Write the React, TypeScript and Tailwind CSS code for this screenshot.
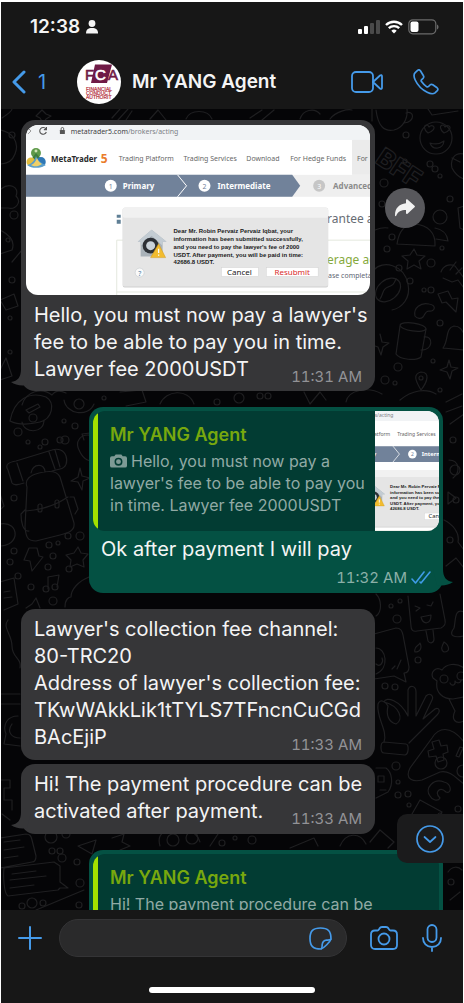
import type { ReactNode } from "react";

type QuoteData = {
  author: string;
  text: string;
  photo?: boolean;
};

type Message = {
  id: number;
  mine?: boolean;
  tail?: boolean;
  photo?: boolean;
  quote?: QuoteData;
  text: string;
  time: string;
  gap: string;
};

const CONTACT = "Mr YANG Agent";

const messages: Message[] = [
  {
    id: 1,
    tail: true,
    photo: true,
    text: "Hello, you must now pay a lawyer's\nfee to be able to pay you in time.\nLawyer fee 2000USDT",
    time: "11:31 AM",
    gap: "mt-0",
  },
  {
    id: 2,
    mine: true,
    tail: true,
    quote: {
      author: CONTACT,
      text: "Hello, you must now pay a\nlawyer's fee to be able to pay you\nin time. Lawyer fee 2000USDT",
      photo: true,
    },
    text: "Ok after payment I will pay",
    time: "11:32 AM",
    gap: "mt-4",
  },
  {
    id: 3,
    text: "Lawyer's collection fee channel:\n80-TRC20\nAddress of lawyer's collection fee:\nTKwWAkkLik1tTYLS7TFncnCuCGd\nBAcEjiP",
    time: "11:33 AM",
    gap: "mt-4",
  },
  {
    id: 4,
    tail: true,
    text: "Hi! The payment procedure can be\nactivated after payment.",
    time: "11:33 AM",
    gap: "mt-1",
  },
  {
    id: 5,
    mine: true,
    tail: true,
    quote: { author: CONTACT, text: "Hi! The payment procedure can be\nactivated after payment." },
    text: "Ok",
    time: "11:34 AM",
    gap: "mt-4",
  },
];

const dots = [
  [18, 432, 4], [28, 442, 2], [40, 447, 2], [45, 442, 3], [60, 440, 3], [65, 440, 4], [75, 426, 3], [64, 421, 2],
  [14, 498, 3], [49, 545, 3], [58, 543, 2], [68, 536, 3], [80, 536, 4], [14, 551, 3], [10, 562, 3], [53, 556, 3],
  [48, 567, 3], [69, 569, 3], [18, 576, 3], [31, 587, 3], [53, 601, 4], [10, 318, 2], [10, 352, 2], [406, 135, 3],
  [405, 161, 2], [430, 164, 3], [435, 169, 3], [384, 183, 4], [382, 204, 3], [440, 176, 2], [450, 199, 3],
  [387, 249, 3], [399, 268, 3], [431, 263, 4], [410, 281, 3], [431, 290, 3], [442, 248, 2], [392, 237, 3],
  [424, 290, 2], [440, 323, 3], [398, 367, 4], [385, 380, 4], [433, 361, 2], [395, 383, 2], [440, 390, 2],
  [260, 396, 3], [268, 396, 3], [239, 398, 5], [217, 402, 3], [104, 398, 2], [391, 606, 2], [400, 601, 2],
  [397, 619, 4], [418, 660, 3], [385, 686, 3], [395, 687, 3], [396, 766, 4], [398, 782, 2], [398, 795, 3],
  [408, 794, 3], [409, 805, 2], [458, 809, 3], [440, 815, 2], [51, 837, 6], [60, 851, 3], [52, 851, 3], [62, 858, 4],
  [77, 862, 3], [66, 834, 4], [80, 883, 4], [32, 903, 5], [43, 903, 3], [22, 906, 3], [79, 905, 3], [451, 882, 3],
  [222, 843, 3], [235, 838, 2], [252, 840, 4], [173, 840, 6], [192, 838, 6], [12, 135, 3], [453, 440, 3],
  [450, 540, 3], [456, 500, 3], [14, 215, 4], [8, 240, 2], [12, 280, 3], [455, 470, 5],
];

// faint line drawings behind the conversation
function Wallpaper() {
  return (
    <svg
      aria-hidden="true"
      viewBox="0 109 464 801"
      preserveAspectRatio="xMidYMin slice"
      className="absolute inset-0 h-full w-full"
      fill="none"
      stroke="#1f1f21"
      strokeWidth="1.2"
      strokeLinecap="round"
      strokeLinejoin="round"
    >
      {dots.map(([x, y, r]) => (
        <circle key={`${x}-${y}`} cx={x} cy={y} r={r} />
      ))}
      {/* top strip */}
      <path d="M2 118c6-4 10-8 10-9M38 114l4-4 4 4 5 2-5 3-3 4-3-5-4-2zM112 118l8-9M118 120l10-11M126 120l6-9M150 119l8-9 8 10M186 119c4-10 22-10 26 0M250 118l12-8M262 120l12-10M300 119c3-9 14-12 20-5M330 119c6-8 18-10 22-9" />
      {/* left edge */}
      <path d="M0 130c12 2 20 12 15 24-3 8-10 10-15 10M0 190c8-8 20-4 16 6 6 6 0 14-8 12H0M0 230c8 4 16 10 12 20l-12 4M12 262l10-12M0 300l14-6 4 12-12 4zM0 370l6-12 6 18-12 4" />
      {/* cup and smiley */}
      <path d="M376 110c2 16 8 22 18 20 8-2 14-10 13-21M406 113c8-3 10 8-2 10M372 109v12M428 109l4 6 26-4" />
      <circle cx="436" cy="138" r="16" />
      <path d="M428 133c-4-3-5-8-1-8 1 0 2 2 2 2s2-2 4-1c3 2-1 6-5 7zM444 133c-4-3-5-8-1-8 1 0 2 2 2 2s2-2 4-1c3 2-1 6-5 7zM430 143c6 2 10 1 14-2-1 8-11 10-14 2z" />
      <path d="M464 154c-10-2-14 6-12 14 3 6 6 9 12 11M452 158l8 4" />
      {/* two people */}
      <path d="M397 244c2-14 8-20 18-20 12 1 21 8 20 22zM388 228c-5-1-8 0-13 2M435 228c6 1 12 5 13 13l-12-2" />
      <path d="M408 218c-6-8 2-16 9-13 8 3 7 13 1 18" />
      <circle cx="440" cy="217" r="7" />
      <path d="M464 206l-6 2 2 20 4 2" />
      <path d="M414 249l3 6 8 1-6 5 2 8-7-4-7 4 1-8-6-5 8-1z" />
      <path d="M441 272c2-6 8-9 14-6l9 12M443 278l9 4 6-2 6 8M450 270l6-8M456 274l6-6" />
      {/* coffee bean */}
      <path d="M374 270c8-10 30-6 34 14 3 14-6 24-16 26" />
      <ellipse cx="388" cy="290" rx="14" ry="10" transform="rotate(-40 388 290)" />
      <path d="M380 299c4-6 2-10 8-12s6-4 8-8" />
      <path d="M438 294l10-3 4 8 6-1-2 14-10-10-4 1zM415 316c-2-8 6-14 14-12 8 1 6 8 0 7-4 0-4 4-6 6s-6 2-8-1z" />
      {/* mug, bell, pin, spark */}
      <ellipse cx="413" cy="327" rx="13" ry="4" transform="rotate(8 413 327)" />
      <path d="M400 326l-4 28c4 6 20 7 25 3l5-28M424 337c10-2 9 14-3 13" />
      <path d="M443 348c6-8 2-20 11-22 6 0 8 4 10 8M443 348l21 2" />
      <path d="M421 390c-6-10-8-16 0-18 9 0 7 9 0 18z" />
      <circle cx="421" cy="378" r="2" />
      <path d="M449 360l2 7 7 1-6 3-2 8-3-7-7-2 7-3zM380 334l2 8 7 1-6 4-2 8-3-8-3-1" />
      {/* strip between first two bubbles */}
      <path d="M22 405c4-14 20-18 30-10 4-6 10-4 14-2M120 392l22-2 4 12-20 4M160 404c6-14 28-16 34 0M304 392l6 12 10-12 6 8M346 402c2-12 22-16 36-8M400 400c12-10 26-12 36-6M446 402l16-8" />
      {/* camper, roll and backpack */}
      <path d="M10 421c4-22 20-30 36-24 10 6 6 22-6 25-12 3-22 3-30-1zM26 410l12-6 2 3-11 6zM22 422c2 12 22 12 22-2M64 400c2 14 24 18 30 4" />
      <circle cx="33" cy="418" r="4" />
      <circle cx="79" cy="404" r="5" />
      <path d="M8 470c-4-6 2-8 8-9l36-11c6-2 12 0 14 6s0 12-6 13l-8 2M8 470l4 13c2 3 6 2 12 0M17 463l6 18M49 452l6 17M55 450l5 17" />
      <path d="M27 487c-3-8 4-12 12-14s18-3 21 4l14 46c1 8-6 10-14 12l-24 6c-10 0-10-6-11-14zM31 473c2-10 14-10 14-1M26 511c16-1 30-6 42-14M25 510l-4 4c0 8 2 18 8 17M70 497l4 0 4 12-3 5" />
      <rect x="38" y="504" width="4" height="8" rx="2" />
      <rect x="55" y="500" width="4" height="8" rx="2" />
      <path d="M80 468l2 8 8 2-7 3-1 9-4-8-7-1 7-4zM94 436c-14-4-20 6-14 16 4 8 10 10 14 8M84 440l-2-6 8-1" />
      <path d="M0 524c10-2 16 4 15 12-2 8-10 10-15 10M0 494l4 12-4 4" />
      <path d="M29 548l8 0 2 8 4 1-11 14-2-10-6-1zM78 547l3 6 7 1-5 6 1 7-7-3-7 3 1-7-5-5 8-2zM48 589v-12l11-2-2 12" />
      <circle cx="46" cy="589" r="3" />
      <circle cx="55" cy="587" r="3" />
      <path d="M0 582l14-4 4 26-14 6M4 592l6-1M4 598l8-1M65 607c0-8 4-10 6-10 0-8 8-16 18-20M26 608l6-4 4-6 4 10" />
      {/* left of the grey bubbles */}
      <path d="M8 620c-6 8 4 14 4 26s10 12 8 22M0 694h20M0 704h20M18 716c-10 0-16 8-12 18l-2 10 16 2M12 724c-6 8 0 14 8 14M0 780h10v8H4v12h8v10M10 820l-8-6" />
      {/* right of the outgoing bubble */}
      <path d="M446 412l16-6M450 424l14-10M449 460c10 0 12 12 4 18M448 492l8 6-8 6zM444 520c8 4 16 12 14 22l6 8M446 566l10-8 8 10" />
      {/* popsicle, speech, cat */}
      <path d="M408 596l3 30c0 4 2 6 6 5l24-3c4-2 5-4 4-8l-5-26M426 631l2 10c2 3 6 2 6-2l-1-9M415 606l5 2-4 3M427 605l4 1 2-4M421 617l10-2c0 10-8 10-10 2zM376 594c6 6 6 18 0 22" />
      <path d="M374 634l22-6c5 0 6 3 7 7l6 32c0 4-2 6-5 6l2 9-12-6-20 3M376 648c10 0 14 20 0 26M376 664c4 4 8-2 6-6M395 666l-3 3M401 660l-4 9" />
      <path d="M415 652c-2-6 4-6 5-9 2 4 1 9-5 9zM444 652c-4-2-2-6 0-10 5 3 7 10 0 10zM464 612c-10-4-8 8-10 16-6 8 0 10 10 8" />
      <path d="M464 668c-8-6-18-4-22 2-6-4-12 2-9 8l4 3c-2 12 6 18 16 18l11-2M449 699l6 12c-4 8 0 14 9 10" />
      <circle cx="444" cy="679" r="4" />
      <circle cx="461" cy="676" r="4" />
      <path d="M450 683c2 4 6 2 5-2 2 3 6 2 6-1" />
      {/* ok hand */}
      <path d="M384 742c4-12-8-24-6-38 2-6 8-2 10 2-2 8 0 16 8 18 8-4 4-18-12-22 2-6 16-2 24 14l0-26c2-6 8-4 8 2l0 24 10-20c4-4 8 0 6 4l-9 19 12-10c4-2 6 2 2 6l-28 28" />
      <path d="M384 742l22 2c3 0 3 10-1 11l-21-2c-4 0-4-11 0-11z" />
      {/* gamepad */}
      <path d="M464 742c-14-18-26-14-32-4l-22 30c-6 12 4 14 12 12l18-8c10-2 16 6 24 12" />
      <path d="M432 742l7-2 2 6 6-1 1 7-5 2 1 6-6 2-2-6-7 1-1-6 6-2z" />
      <circle cx="441" cy="763" r="6" />
      <circle cx="463" cy="771" r="6" />
      <path d="M456 756l4-9 3 1-4 9zM430 796c-6-8 4-18 14-14 8 2 8 12 2 10-6-6-12 0-6 6-2 4-8 2-10-2z" />
      <path d="M376 768l10 0c6 4 8 16 2 24l-12 6M378 776h6v6h-6zM380 790h6M420 800l22 12-8 14M420 800l-8 14" />
      {/* envelopes and tools, bottom left */}
      <path d="M0 838l26-4c4 0 5 2 6 6l4 16c0 4-2 6-4 6l-32 6M4 842l16-2M4 850l20-3M4 858l14-2M4 868l50-6 6 4 0 16 8 6-8 0-2 2-50 6c-4-2-5-20-4-28zM12 874l24-3M10 880l36-4M10 888l24-3M36 910l48-20M78 846l18-6-4 14z" />
      <path d="M112 838l12-4-2 8 8 4-10 4M160 846c-4-14 8-18 16-12 8-6 20-4 24 8M210 846l8-12M290 848l24-10 4 8M340 846c6-14 20-14 26-2M370 842l10-12 14 12-6 6M448 872c4-6 10-6 14-2M450 900l10-8" />
      <text
        x="374"
        y="162"
        transform="rotate(34 374 162)"
        className="font-['Inter',sans-serif] text-[26px] font-extrabold"
      >
        BFF
      </text>
    </svg>
  );
}

// attached photo, also used cropped as the quote thumbnail
function BrokerPhoto({ viewBox, className }: { viewBox: string; className: string }) {
  return (
    <svg
      role="img"
      aria-label="Photo"
      viewBox={viewBox}
      preserveAspectRatio="xMidYMid slice"
      className={`font-['Noto_Sans',sans-serif] ${className}`}
    >
      <rect x="20" y="120" width="360" height="180" fill="#fff" />
      <rect x="20" y="120" width="360" height="20" fill="#f1f3f5" />
      <path d="M28 128l3 3-3 3" fill="none" stroke="#999" />
      <path d="M46 129a3.400 3.400 0 1 0 .4 3M46.500 127v2.600h-2.600" fill="none" stroke="#555" strokeWidth="1.100" />
      <rect x="60" y="130" width="5" height="4" rx=".5" fill="#555" />
      <path d="M61.200 130v-1.200a1.300 1.300 0 0 1 2.600 0v1.200" fill="none" stroke="#555" strokeWidth=".9" />
      <text x="71" y="134" fontSize="7" fill="#3c4043">
        metatrader5.com<tspan fill="#7c8085">/brokers/acting</tspan>
      </text>

      <circle cx="36" cy="153" r="5" fill="#5f9a4a" />
      <path d="M30 161l6-8 7 8z" fill="#3f7d3d" />
      <circle cx="31" cy="162" r="4.500" fill="#e2bd3f" />
      <circle cx="41" cy="162" r="4.800" fill="#2f77b5" />
      <path d="M27 165c5-1 8-5 9-9 2 5 5 7 10 9-6 4-14 4-19 0z" fill="#5d9fc9" />
      <path d="M31 165c3-1 5-4 6-7 1 3 3 5 5 6-4 3-8 3-11 1z" fill="#f0d068" />
      <circle cx="36" cy="151" r="1.500" fill="#cfe3b5" />
      <text x="51" y="162" fontSize="8" fontWeight="700" fill="#2b2b2b">MetaTrader</text>
      <text x="101" y="163" fontSize="12" fontWeight="700" fill="#ea7c2b">5</text>

      <rect x="353" y="140" width="30" height="35" fill="#ebebeb" />
      <g fontSize="7" fill="#666">
        <text x="119" y="161">Trading Platform</text>
        <text x="184" y="161">Trading Services</text>
        <text x="247" y="161">Download</text>
        <text x="291" y="161">For Hedge Funds</text>
        <text x="358" y="161">For</text>
      </g>

      <rect x="20" y="175" width="360" height="22" fill="#efefef" />
      <path d="M20 175h273l8 11-8 11H20z" fill="#71829a" />
      <path d="M178 175l9 11-9 11" fill="none" stroke="#fff" />
      <circle cx="111" cy="186" r="6" fill="#fff" />
      <circle cx="205" cy="186" r="6" fill="#fff" />
      <circle cx="320" cy="186" r="6" fill="#c6c6c6" />
      <g fontSize="7" textAnchor="middle">
        <text x="111" y="189" fill="#71829a">1</text>
        <text x="205" y="189" fill="#71829a">2</text>
        <text x="320" y="189" fill="#fff">3</text>
      </g>
      <g fontSize="8" fontWeight="700">
        <text x="123" y="189" fill="#fff">Primary</text>
        <text x="218" y="189" fill="#fff">Intermediate</text>
        <text x="334" y="189" fill="#8b8b8b">Advanced</text>
      </g>

      <path d="M117 215h4v3h-4zM117 220h4v4h-4z" fill="#5f7f95" />
      <path d="M117 300V240.500h260M117 292.500h260" fill="none" stroke="#e4e8de" />
      <text x="328" y="223" fontSize="12" fill="#666b73">rantee a</text>
      <text x="328" y="264" fontSize="12" fill="#86a93c">erage ag</text>
      <text x="329" y="278" fontSize="7" fill="#5d6472">ase completa</text>

      <rect x="123" y="208" width="206" height="80" rx="2" fill="#cfcfcf" />
      <rect x="123" y="208" width="206" height="79" rx="2" fill="#e5e5e5" />
      <rect x="123" y="208" width="206" height="10" rx="2" fill="#f1f1f1" />
      <path d="M152 230l-14 12h3v15h22v-15h4z" fill="#a9b2b9" />
      <path d="M152 230l-14 12h3v4l11-10 11 10v-4h4z" fill="#c3ccd3" />
      <circle cx="151" cy="246" r="8" fill="#2c3036" />
      <circle cx="151" cy="246" r="4.500" fill="#c9d2da" />
      <path d="M159 244l7 14h-15z" fill="#f2bc2f" stroke="#d09a1c" strokeWidth=".5" />
      <path d="M159 249v4.500M159 255v1.200" stroke="#fff" strokeWidth="1.300" />
      <g fontSize="6" fontWeight="700" fill="#1b1b1b" className="font-['Liberation_Sans',sans-serif]">
        <text x="174" y="233">Dear Mr. Robin Pervaiz Pervaiz Iqbat, your</text>
        <text x="174" y="241">information has been submitted successfully,</text>
        <text x="174" y="249">and you need to pay the lawyer's fee of 2000</text>
        <text x="174" y="257">USDT. After payment, you will be paid in time:</text>
        <text x="174" y="264">42686.8 USDT.</text>
      </g>
      <circle cx="140" cy="273" r="4.500" fill="#fafafa" stroke="#c4c9cd" strokeWidth=".6" />
      <text x="140" y="276" fontSize="7" textAnchor="middle" fill="#4d7fa8">?</text>
      <rect x="222" y="268" width="37" height="9" fill="#fff" stroke="#d2d2d2" strokeWidth=".5" />
      <rect x="267" y="268" width="52" height="9" fill="#fff" stroke="#d2d2d2" strokeWidth=".5" />
      <g fontSize="8" textAnchor="middle">
        <text x="240" y="275" fill="#222">Cancel</text>
        <text x="293" y="275" fill="#d92b2b">Resubmit</text>
      </g>
    </svg>
  );
}

function Tail({ mine }: { mine?: boolean }) {
  return mine ? (
    <svg aria-hidden="true" viewBox="0 0 20 20" className="absolute -right-[10px] bottom-[4px] h-5 w-5">
      <path d="M10 0c0 8 3 12 10 13-4 3-10 4-16 3L0 0z" fill="#045143" />
    </svg>
  ) : (
    <svg aria-hidden="true" viewBox="0 0 20 20" className="absolute -left-[10px] bottom-[2px] h-5 w-5">
      <path d="M10 0c0 8-3 12-10 13 4 3 10 4 16 3L20 0z" fill="#363638" />
    </svg>
  );
}

function Quote({ quote }: { quote: QuoteData }) {
  return (
    <blockquote className="flex h-[120px] overflow-hidden rounded-xl bg-[#023c33]">
      <span className="w-[5px] shrink-0 bg-[#a3e000]" />
      <div className="min-w-0 flex-1 pt-3 pl-3">
        <p className="text-lg leading-6 font-semibold text-[#78a80e]">{quote.author}</p>
        <p className="mt-[3px] text-base leading-[22px] whitespace-pre text-[#91aaa5]">
          {quote.photo && (
            <svg aria-label="Photo" viewBox="0 0 18 14" className="mr-1 inline-block h-[14px] w-[17px] align-[-1px]">
              <path
                fillRule="evenodd"
                d="M6 0h6l1.500 2H16a2 2 0 0 1 2 2v8a2 2 0 0 1-2 2H2a2 2 0 0 1-2-2V4a2 2 0 0 1 2-2h2.500zM9 3.500a4.200 4.200 0 1 0 0 8.400 4.200 4.200 0 0 0 0-8.400zm0 1.600a2.600 2.600 0 1 1 0 5.200 2.600 2.600 0 0 1 0-5.200z"
                fill="#7d9a95"
              />
            </svg>
          )}
          {quote.text}
        </p>
      </div>
      {quote.photo && <BrokerPhoto viewBox="153 126 89 167" className="h-full w-16 shrink-0" />}
    </blockquote>
  );
}

function Bubble({ message }: { message: Message }) {
  const { mine, tail, photo, quote, text, time } = message;

  if (mine) {
    return (
      <div className="relative w-full max-w-[354px] rounded-[14px] bg-[#045143] px-1 pt-1 pb-1">
        {tail && <Tail mine />}
        {quote && <Quote quote={quote} />}
        <p className="mt-[5px] pl-2 text-xl leading-[27px] whitespace-pre text-[#f4f6f5]">{text}</p>
        <p className="mt-1 flex items-center justify-end gap-1 pr-2 text-[15px] leading-[22px] text-[#8bb0a8]">
          <time className="tabular-nums">{time}</time>
          <svg aria-label="Read" viewBox="0 0 20 13" className="h-[13px] w-5" fill="none" stroke="#3f9be6" strokeWidth="1.600" strokeLinecap="round" strokeLinejoin="round">
            <path d="M1 8l3.500 4L13 1M9 11l1 1L19 1" />
          </svg>
        </p>
      </div>
    );
  }

  return (
    <div className={`relative w-full max-w-[354px] rounded-[14px] bg-[#363638] px-[5px] ${photo ? "pt-[5px] pb-2" : "pt-[7px] pb-[9px]"}`}>
      {tail && <Tail />}
      {photo && <BrokerPhoto viewBox="26 125 345 170" className="mb-[7px] block aspect-[345/170] w-full rounded-xl" />}
      <p className="pr-2 pl-2 text-xl leading-[27px] whitespace-pre text-[#f4f4f5]">
        {text}
        <time className="float-right mt-3 -mb-[3px] text-[15px] leading-[18px] tabular-nums text-[#929296]">{time}</time>
      </p>
    </div>
  );
}

function StatusBar() {
  return (
    <div className="flex h-[26px] items-center pr-6 pl-[29px]">
      <span className="text-[19px] leading-6 font-semibold">12:38</span>
      <svg aria-hidden="true" viewBox="0 0 12 14" className="ml-[6px] h-[14px] w-3" fill="#f4f4f4">
        <circle cx="6" cy="3.500" r="3.400" />
        <path d="M0 13.500c0-4 2-5.500 6-5.500s6 1.500 6 5.500z" />
      </svg>
      <div className="ml-auto flex items-center gap-[5px]">
        <svg aria-hidden="true" viewBox="0 0 22 14" className="h-[14px] w-[22px]" fill="#4a4a4a">
          <rect x="0" y="9" width="4" height="5" rx="1" fill="#fff" />
          <rect x="6" y="6" width="4" height="8" rx="1" fill="#fff" />
          <rect x="12" y="3" width="4" height="11" rx="1" />
          <rect x="18" y="0" width="4" height="14" rx="1" />
        </svg>
        <svg aria-hidden="true" viewBox="0 0 18 14" className="h-[14px] w-[18px]" fill="none" stroke="#fff" strokeWidth="2.400">
          <path d="M1 5a11.500 11.500 0 0 1 16 0M3.800 8.200a7.500 7.500 0 0 1 10.400 0" />
          <path d="M9 13.500L6.300 10.700a4 4 0 0 1 5.400 0z" fill="#fff" stroke="none" />
        </svg>
        <svg aria-hidden="true" viewBox="0 0 31 16" className="h-4 w-[31px]">
          <rect x=".8" y=".8" width="27" height="14" rx="4" fill="none" stroke="#6b6b6b" strokeWidth="1.200" />
          <rect x="2.500" y="2.500" width="8" height="10.600" rx="2" fill="#fff" />
          <path d="M29 5.500c2 .8 2 4 0 5z" fill="#6b6b6b" />
        </svg>
      </div>
    </div>
  );
}

function Avatar() {
  return (
    <svg role="img" aria-label="FCA" viewBox="0 0 44 44" className="h-11 w-11 shrink-0 font-['Liberation_Sans',sans-serif]">
      <circle cx="22" cy="22" r="22" fill="#fff" />
      <path d="M18 4.500h17L30 23H14z" fill="#6f1a46" />
      <g fontSize="15" fill="#6f1a46" stroke="#6f1a46" strokeWidth=".6">
        <text x="8" y="20">F</text>
        <text x="31" y="20">A</text>
        <text x="18" y="20" fill="#fff" stroke="#fff">C</text>
      </g>
      <g fontSize="5" fill="#b5333f" stroke="#b5333f" strokeWidth=".2">
        <text x="9" y="31">FINANCIAL</text>
        <text x="9" y="35">CONDUCT</text>
        <text x="9" y="39">AUTHORIT</text>
      </g>
    </svg>
  );
}

function IconButton({ label, className, children }: { label: string; className?: string; children: ReactNode }) {
  return (
    <button type="button" aria-label={label} className={`shrink-0 text-[#459ae9] ${className ?? ""}`}>
      {children}
    </button>
  );
}

function Header() {
  return (
    <header className="bg-[#171717] pt-3 pb-[5px] text-[#f4f4f4]">
      <StatusBar />
      <div className="mt-5 flex items-center pr-6 pl-[11px]">
        <button type="button" aria-label="Back, 1 unread chat" className="flex w-[65px] items-center gap-3 text-xl leading-6 text-[#459ae9]">
          <svg aria-hidden="true" viewBox="0 0 14 24" className="h-6 w-[14px]" fill="none" stroke="currentColor" strokeWidth="3" strokeLinecap="round" strokeLinejoin="round">
            <path d="M12 2L2 12l10 10" />
          </svg>
          1
        </button>
        <Avatar />
        <h1 className="ml-[11px] text-[19px] leading-6 font-semibold whitespace-nowrap">{CONTACT}</h1>
        <div className="ml-auto flex items-center gap-[30px]">
          <IconButton label="Video call">
            <svg aria-hidden="true" viewBox="0 0 32 22" className="h-[22px] w-8" fill="none" stroke="currentColor" strokeWidth="1.800" strokeLinejoin="round">
              <rect x="1" y="1" width="21" height="20" rx="4" />
              <path d="M22 11l7-6.500c1-.8 2-.5 2 1v11c0 1.500-1 1.800-2 1z" />
            </svg>
          </IconButton>
          <IconButton label="Voice call">
            <svg aria-hidden="true" viewBox="0 0 26 26" className="h-[26px] w-[26px]" fill="none" stroke="currentColor" strokeWidth="1.700" strokeLinejoin="round">
              <path d="M4.600 1.400L2.200 3.600C.6 5.200.8 8 2.200 11c2.400 5.200 6.600 9.600 12 12.300 3 1.500 6 2 7.800.6l2.300-2.300c.9-1 .8-2-.2-2.800l-4.300-3c-1-.7-2-.6-2.800.2l-1.500 1.500c-.6.6-1.300.6-2 .1-1.900-1.300-3.600-3-5-5-.5-.7-.4-1.400.2-2l1.400-1.300c.8-.9.9-1.800.2-2.800L7.400 1.700c-.8-1-1.800-1.100-2.800-.3z" />
            </svg>
          </IconButton>
        </div>
      </div>
    </header>
  );
}

function Composer() {
  return (
    <footer className="bg-[#171717] pt-[9px] pb-[10px]">
      <div className="flex items-center pr-[21px] pl-[17px]">
        <IconButton label="Attach">
          <svg aria-hidden="true" viewBox="0 0 24 24" className="h-6 w-6" fill="none" stroke="currentColor" strokeWidth="2" strokeLinecap="round">
            <path d="M12 1v22M1 12h22" />
          </svg>
        </IconButton>
        <div className="ml-[17px] flex h-[38px] min-w-0 flex-1 items-center rounded-full border border-[#343436] bg-[#2a2a2b] pr-[14px] pl-4">
          <input type="text" aria-label="Message" className="min-w-0 flex-1 bg-transparent text-lg text-white outline-none" />
          <IconButton label="Stickers">
            <svg aria-hidden="true" viewBox="0 0 23 23" className="h-[23px] w-[23px]" fill="none" stroke="currentColor" strokeWidth="1.700" strokeLinejoin="round">
              <path d="M12 22C4 22 1 19 1 11.500S4 1 11.500 1 22 4 22 12c-1 3-7 9-10 10z" />
              <path d="M12 22c1.500-1 1-3 1.200-4.500.4-2.700 1.600-4 4.300-4.300 1.500-.2 3.500.3 4.500-1.200" />
            </svg>
          </IconButton>
        </div>
        <IconButton label="Camera" className="ml-[23px]">
          <svg aria-hidden="true" viewBox="0 0 28 24" className="h-6 w-7" fill="none" stroke="currentColor" strokeWidth="1.800" strokeLinejoin="round">
            <path d="M9.500 2.500C10 1.500 11 1 12 1h4c1 0 2 .5 2.500 1.500l.8 1.300c.3.500.7.700 1.200.7H23c2.500 0 4 1.500 4 4V19c0 2.500-1.500 4-4 4H5c-2.500 0-4-1.500-4-4V8.500c0-2.500 1.500-4 4-4h2.500c.5 0 .9-.2 1.200-.7z" />
            <circle cx="14" cy="13" r="5.500" />
          </svg>
        </IconButton>
        <IconButton label="Voice message" className="ml-6">
          <svg aria-hidden="true" viewBox="0 0 20 28" className="h-7 w-5" fill="none" stroke="currentColor" strokeWidth="1.800" strokeLinecap="round">
            <rect x="5.500" y="1" width="9" height="17" rx="4.500" />
            <path d="M1 14c0 5 3.500 9 9 9s9-4 9-9M10 23v4" />
          </svg>
        </IconButton>
      </div>
      <div className="mx-auto mt-[30px] h-[6px] w-[36%] rounded-full bg-white" />
    </footer>
  );
}

export default function App() {
  return (
    <div className="h-screen bg-white px-px pt-[2px] font-['Inter',sans-serif]">
      <div className="flex h-full flex-col">
        <Header />
        <main className="relative min-h-0 flex-1 overflow-hidden bg-[#050507]">
          <Wallpaper />
          <ol className="relative px-5 pt-[11px]">
            {messages.map((m) => (
              <li key={m.id} className={`flex gap-[10px] ${m.gap} ${m.mine ? "justify-end" : ""}`}>
                <Bubble message={m} />
                {m.photo && (
                  <button type="button" aria-label="Forward" className="mt-[68px] flex h-10 w-10 shrink-0 items-center justify-center rounded-full bg-[#58585c]">
                    <svg aria-hidden="true" viewBox="0 0 20 18" className="h-[18px] w-5" fill="#f2f2f2">
                      <path d="M11 1.200c0-1 .8-1.300 1.500-.7l7 6.300c.6.500.6 1 0 1.500l-7 6.400c-.7.600-1.500.2-1.500-.7v-3C6 11 3 12.500 1.200 16.700c-.3.700-1.200.5-1.200-.3C0 9.500 4 4.800 11 4.300z" />
                    </svg>
                  </button>
                )}
              </li>
            ))}
          </ol>
          <button
            type="button"
            aria-label="Scroll to latest"
            className="absolute right-0 bottom-[47px] flex h-[49px] w-[66px] items-center justify-center rounded-l-[10px] bg-[#1b1b1c] text-[#459ae9]"
          >
            <svg aria-hidden="true" viewBox="0 0 28 28" className="h-7 w-7" fill="none" stroke="currentColor" strokeWidth="1.700" strokeLinecap="round" strokeLinejoin="round">
              <circle cx="14" cy="14" r="13" />
              <path d="M8.500 12l5.500 5 5.500-5" />
            </svg>
          </button>
        </main>
        <Composer />
      </div>
    </div>
  );
}
